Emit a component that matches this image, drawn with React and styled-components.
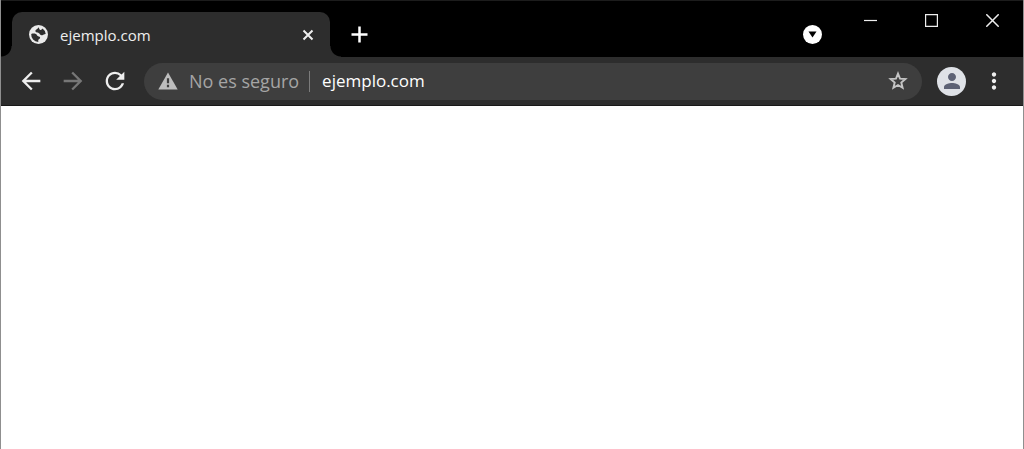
import styled, { createGlobalStyle, css } from "styled-components";
import {
    MdArrowBack,
    MdArrowForward,
    MdMoreVert,
    MdPerson,
    MdRefresh,
} from "react-icons/md";

const GlobalStyle = createGlobalStyle`
    *{
        box-sizing: border-box;
    }

    body{
        margin: 0;
        background: #ffffff;
        font-family: "Open Sans", "Noto Sans", sans-serif;
    }

    button, input{
        font-family: inherit;
        border: none;
        padding: 0;
        margin: 0;
        background: none;
        color: inherit;
    }
`

const Ventana = styled.div`
    min-height: 100vh;
    display: flex;
    flex-direction: column;
    border: solid #8f8f8f;
    border-width: 0 1px;
`

const BarraTitulo = styled.header`
    display: flex;
    align-items: flex-start;
    height: 57px;
    padding-left: 11px;
    background: #000000;
    border-top: 1px solid #1c1c1c;
    color: #ffffff;
`

const Pestana = styled.div`
    position: relative;
    display: flex;
    align-items: center;
    flex: 0 1 318px;
    min-width: 0;
    height: 45px;
    margin-top: 11px;
    padding: 0 12px 0 17px;
    border-radius: 10px 10px 0 0;
    background: #2d2d2d;
    color: #eeeeee;

    &::before, &::after{
        content: "";
        position: absolute;
        bottom: 0;
        width: 11px;
        height: 11px;
    }

    &::before{
        right: 100%;
        background: radial-gradient(circle at 0 0, transparent 10px, #2d2d2d 11px);
    }

    &::after{
        left: 100%;
        background: radial-gradient(circle at 100% 0, transparent 10px, #2d2d2d 11px);
    }
`

const TituloPestana = styled.button`
    display: flex;
    align-items: center;
    gap: 12px;
    flex: 1;
    min-width: 0;
    font-size: 15px;
    font-weight: 500;
    line-height: 24px;

    svg{
        flex: none;
    }
`

const BotonIcono = styled.button`
    display: flex;
    align-items: center;
    justify-content: center;
    flex: none;
    width: ${({ $ancho }) => $ancho || 42}px;
    height: ${({ $alto }) => $alto || 36}px;
    color: ${({ $color }) => $color || "#eeeeee"};

    ${({ $pestana }) => $pestana && css`
        margin-top: 15px;
    `}
`

const Espacio = styled.div`
    flex: 1;
`

const Herramientas = styled.nav`
    display: flex;
    align-items: center;
    height: 49px;
    padding: 0 8px 0 9px;
    background: #2d2d2d;
    border-bottom: 1px solid #191919;
`

const Direccion = styled.form`
    display: flex;
    align-items: center;
    flex: 1;
    min-width: 0;
    height: 37px;
    margin: 0 8px;
    padding: 0 3px 0 14px;
    border-radius: 19px;
    background: #3e3e3e;
`

const Seguridad = styled.button`
    display: flex;
    align-items: center;
    gap: 11px;
    flex: none;
    padding-right: 10px;
    color: #a5a5a5;
    font-size: 18px;
    line-height: 24px;
`

const Separador = styled.span`
    width: 1px;
    height: 21px;
    margin-right: 12px;
    background: #7b7b7b;
`

const Url = styled.input`
    flex: 1;
    min-width: 0;
    color: #ffffff;
    font-size: 17px;
    font-weight: 500;
    line-height: 24px;
    outline: none;
`

const Perfil = styled.button`
    display: flex;
    align-items: center;
    justify-content: center;
    flex: none;
    width: 29px;
    height: 29px;
    margin: 0 7px;
    border-radius: 50%;
    background: #dfe2e7;
    color: #5d6275;
`

const Pagina = styled.main`
    flex: 1;
    background: #ffffff;
`

const IconoGlobo = () => (
    <svg width="19" height="19" viewBox="0 0 19 19">
        <circle cx="9.5" cy="9.5" r="9.5" fill="#eaeaea" />
        <path
            d="M9.5 2.2C9.300 4 6.400 4.300 6.400 6c0 1.800 3 1.200 4 2.600.8 1.200 1.300 1.900 2.800 1.600 1.200-.3 2.200-1.400 3.500-1.200A7.300 7.300 0 0 0 13.500 3.500c-.5 1.200-1.700 1.800-2.600 1.300-.9-.5-.4-1.600-1.400-2.600z"
            fill="#2d2d2d"
        />
        <path
            d="M2.2 9c1.500-.4 3.200-.6 4.600 0 1.500.7 1 1.800 2.300 2.300 1 .4 2 .4 2 1.500 0 1.200-1.700 1.300-1.900 2.500-.1.600.2 1.100.1 1.600A7.400 7.400 0 0 1 2.200 9z"
            fill="#2d2d2d"
        />
    </svg>
)

const IconoCerrarPestana = () => (
    <svg width="12" height="12" viewBox="0 0 12 12">
        <path d="M1.5 1.5l9 9M10.5 1.5l-9 9" stroke="currentColor" strokeWidth="2" />
    </svg>
)

const IconoMas = () => (
    <svg width="17" height="17" viewBox="0 0 17 17">
        <path d="M8.5.5v16M.5 8.5h16" stroke="currentColor" strokeWidth="2.5" />
    </svg>
)

const IconoBuscarPestanas = () => (
    <svg width="19" height="19" viewBox="0 0 19 19">
        <circle cx="9.5" cy="9.5" r="9.5" fill="#ffffff" />
        <path d="M5.5 6.5h8l-4 6z" fill="#000000" />
    </svg>
)

const IconoMinimizar = () => (
    <svg width="13" height="13" viewBox="0 0 13 13">
        <path d="M0 6.5h13" stroke="#eeeeee" strokeWidth="1.2" />
    </svg>
)

const IconoMaximizar = () => (
    <svg width="13" height="13" viewBox="0 0 13 13">
        <path d="M.6.6h11.8v11.8H.6z" fill="none" stroke="#eeeeee" strokeWidth="1.2" />
    </svg>
)

const IconoCerrar = () => (
    <svg width="13" height="13" viewBox="0 0 13 13">
        <path d="M.3.3l12.4 12.4M12.7.3L.3 12.7" stroke="#eeeeee" strokeWidth="1.5" />
    </svg>
)

const IconoAviso = () => (
    <svg width="20" height="20" viewBox="0 0 20 20">
        <path d="M10 1.5L19.7 18.500H.3z" fill="#bdbdbd" />
        <path d="M10 7.2v5M10 13.800v2.400" stroke="#3e3e3e" strokeWidth="2.2" />
    </svg>
)

const IconoEstrella = () => (
    <svg width="20" height="20" viewBox="0 0 20 20">
        <path
            d="M10 2.6l2 5 5.400.4-4.100 3.500 1.300 5.300L10 14l-4.600 2.800 1.300-5.300L2.600 8 8 7.600z"
            fill="none"
            stroke="currentColor"
            strokeWidth="1.9"
        />
    </svg>
)

const App = () => {
    return (
        <>
            <GlobalStyle />
            <Ventana>
                <BarraTitulo>
                    <Pestana>
                        <TituloPestana type="button">
                            <IconoGlobo />
                            ejemplo.com
                        </TituloPestana>
                        <BotonIcono type="button" aria-label="Cerrar pestaña" $ancho={20} $alto={20}>
                            <IconoCerrarPestana />
                        </BotonIcono>
                    </Pestana>
                    <BotonIcono type="button" aria-label="Nueva pestaña" $ancho={58} $color="#ffffff" $pestana>
                        <IconoMas />
                    </BotonIcono>
                    <Espacio />
                    <BotonIcono type="button" aria-label="Buscar pestañas" $ancho={56} $pestana>
                        <IconoBuscarPestanas />
                    </BotonIcono>
                    <BotonIcono type="button" aria-label="Minimizar" $ancho={61} $alto={38}>
                        <IconoMinimizar />
                    </BotonIcono>
                    <BotonIcono type="button" aria-label="Maximizar" $ancho={61} $alto={38}>
                        <IconoMaximizar />
                    </BotonIcono>
                    <BotonIcono type="button" aria-label="Cerrar" $ancho={61} $alto={38}>
                        <IconoCerrar />
                    </BotonIcono>
                </BarraTitulo>
                <Herramientas>
                    <BotonIcono type="button" aria-label="Atrás">
                        <MdArrowBack size={28} />
                    </BotonIcono>
                    <BotonIcono type="button" aria-label="Adelante" $color="#777777">
                        <MdArrowForward size={28} />
                    </BotonIcono>
                    <BotonIcono type="button" aria-label="Recargar">
                        <MdRefresh size={28} />
                    </BotonIcono>
                    <Direccion onSubmit={(e) => e.preventDefault()}>
                        <Seguridad type="button">
                            <IconoAviso />
                            No es seguro
                        </Seguridad>
                        <Separador />
                        <Url type="text" aria-label="Dirección" defaultValue="ejemplo.com" />
                        <BotonIcono type="button" aria-label="Añadir a marcadores" $color="#c4c4c4">
                            <IconoEstrella />
                        </BotonIcono>
                    </Direccion>
                    <Perfil type="button" aria-label="Perfil">
                        <MdPerson size={24} />
                    </Perfil>
                    <BotonIcono type="button" aria-label="Menú">
                        <MdMoreVert size={26} />
                    </BotonIcono>
                </Herramientas>
                <Pagina />
            </Ventana>
        </>
    )
}

export default App
